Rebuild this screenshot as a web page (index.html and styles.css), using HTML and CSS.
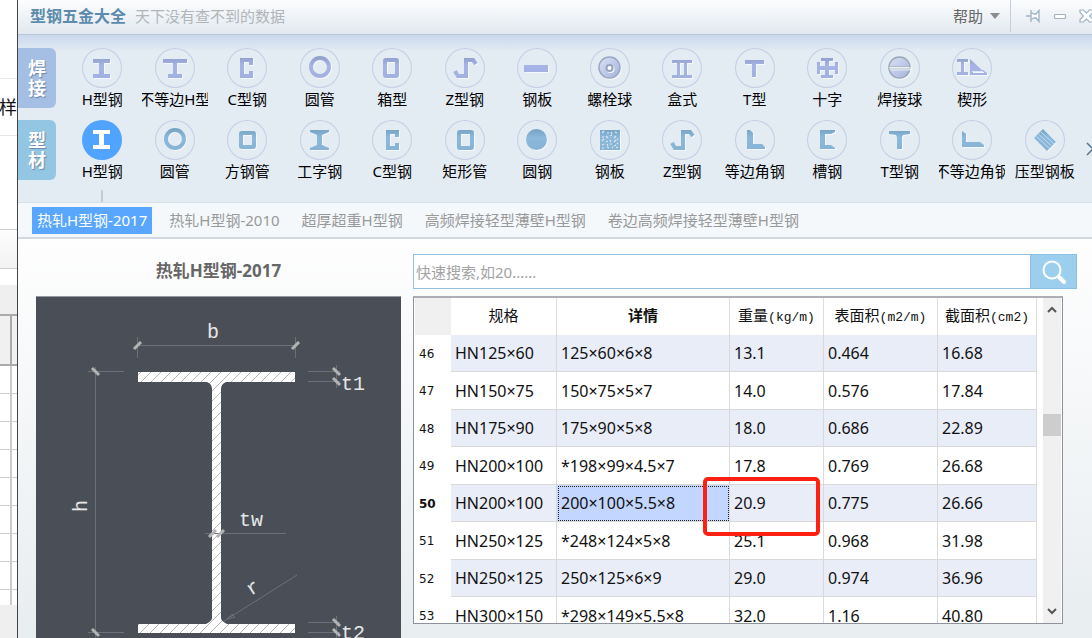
FILE: index.html
```html
<!DOCTYPE html>
<html lang="zh-CN">
<head>
<meta charset="utf-8">
<title>型钢五金大全</title>
<link rel="stylesheet" href="styles.css">
</head>
<body>
<svg class="defs" width="0" height="0" aria-hidden="true">
  <defs>
    <linearGradient id="violet" gradientUnits="userSpaceOnUse" x1="0" y1="9" x2="0" y2="31"><stop offset="0" stop-color="#919fcb"/><stop offset=".4" stop-color="#a6b4e6"/><stop offset="1" stop-color="#a2b0de"/></linearGradient>
    <linearGradient id="blue" gradientUnits="userSpaceOnUse" x1="0" y1="9" x2="0" y2="31"><stop offset="0" stop-color="#76a3c2"/><stop offset=".4" stop-color="#8cb9dc"/><stop offset="1" stop-color="#86b2d2"/></linearGradient>
    <linearGradient id="ball" x1="0" y1="0" x2="1" y2="1"><stop offset="0" stop-color="#dbe2f3"/><stop offset="1" stop-color="#a5b2df"/></linearGradient>
    <pattern id="hatch" width="10" height="10" patternUnits="userSpaceOnUse"><rect width="10" height="10" fill="#fff"/><path d="M-1 11L11 -1" stroke="#b4b4b4" stroke-width="1"/></pattern>
  </defs>
</svg>
<div class="desktop">
  <aside class="backdrop">
    <div class="bd-a"></div><div class="bd-b"><span>样</span></div><div class="bd-c"></div><div class="bd-d"></div><div class="bd-e"></div><div class="bd-f"></div>
    <div class="bd-head"></div>
    <div class="bd-grid"></div>
  </aside>
  <main class="window">
    <header class="titlebar">
      <h1>型钢五金大全</h1>
      <span class="slogan">天下没有查不到的数据</span>
      <button class="help">帮助 <svg width="10" height="6" viewBox="0 0 10 6"><path d="M0 0h10L5 6z" fill="#8c8c8c"/></svg></button>
      <div class="winbtns">
        <button aria-label="固定"><svg width="16" height="14" viewBox="0 0 16 14"><path d="M1 7h5M6 1v12M6 3.500l3 1.500h2l3-3.500v11L11 9H9l-3 1.500" fill="#fff" stroke="#9db3c3" stroke-width="1.300"/></svg></button>
        <button aria-label="最小化"><svg width="14" height="14" viewBox="0 0 14 14"><rect x="1.500" y="5.500" width="11" height="4" rx="1" fill="#fff" stroke="#9db3c3" stroke-width="1.200"/></svg></button>
        <button aria-label="关闭"><svg width="15" height="14" viewBox="0 0 15 14"><path d="M1 1h3.500L7.500 4l3-3H14v2.500L10.500 7l3.500 3.500V13h-3.500l-3-3-3 3H1v-2.500L4.500 7 1 3.500z" fill="#fff" stroke="#9db3c3" stroke-width="1.200"/></svg></button>
      </div>
    </header>

    <section class="ribbon">
      <div class="row violet">
        <button class="side">焊<br>接</button>
        <div class="items">
          <button class="item"><svg viewBox="0 0 40 40"><path d="M11 11h17v4h-6v11h6v4H11v-4h6V15h-6z"/></svg><span>H型钢</span></button>
          <button class="item"><svg viewBox="0 0 40 40"><path d="M8 11h24v4H22v11h5v4H13v-4h5V15H8z"/></svg><span>不等边H型</span></button>
          <button class="item"><svg viewBox="0 0 40 40"><path d="M13 10h13v7h-4v-3h-5v12h5v-3h4v7H13z"/></svg><span>C型钢</span></button>
          <button class="item"><svg viewBox="0 0 40 40"><circle class="ln" cx="20" cy="19" r="9"/></svg><span>圆管</span></button>
          <button class="item"><svg viewBox="0 0 40 40"><rect class="ln" x="13" y="12" width="12" height="16" rx="1"/></svg><span>箱型</span></button>
          <button class="item"><svg viewBox="0 0 40 40"><path class="ln" d="M10 23l3 5h8V12h7l3 4"/></svg><span>Z型钢</span></button>
          <button class="item"><svg viewBox="0 0 40 40"><path d="M7 17h24v7H7z"/></svg><span>钢板</span></button>
          <button class="item"><svg viewBox="0 0 40 40"><circle cx="19.500" cy="19.500" r="10.500" style="fill:url(#ball);stroke:#9aa9c0;stroke-width:1.500"/><circle cx="19.500" cy="20" r="3" style="fill:#fff;stroke:#96a4bf;stroke-width:2"/></svg><span>螺栓球</span></button>
          <button class="item"><svg viewBox="0 0 40 40"><path d="M10 12h20v3h-5v12h5v3H10v-3h5V15h-5zM18 15v12h4V15z" fill-rule="evenodd"/></svg><span>盒式</span></button>
          <button class="item"><svg viewBox="0 0 40 40"><path d="M10 12h19v4h-8v13h-4V16h-7z"/></svg><span>T型</span></button>
          <button class="item"><svg viewBox="0 0 40 40"><path d="M14 10h12v3h-4v5h6v-4h3v12h-3v-4h-6v5h4v3H14v-3h4v-5h-5v4h-3V14h3v4h5v-5h-4z"/></svg><span>十字</span></button>
          <button class="item"><svg viewBox="0 0 40 40"><circle cx="19.500" cy="19.500" r="10.500" style="fill:url(#ball);stroke:#9aa9b8;stroke-width:1.500"/><path d="M9 18.500h21v2.500H9z" style="fill:#edf1f4;stroke:#9aa9b8;stroke-width:.7"/></svg><span>焊接球</span></button>
          <button class="item"><svg viewBox="0 0 40 40"><path d="M5 11h11v3h-4v10h4v3H5v-3h4V14H5zM18 11l12 11H18zM18 22l13 0 4 3v2H18z"/><path d="M20 23.500h11" style="fill:none;stroke:#dfe6f8;stroke-width:1"/></svg><span>楔形</span></button>
        </div>
      </div>
      <div class="row blue">
        <button class="side">型<br>材</button>
        <div class="items">
          <button class="item active"><svg viewBox="0 0 40 40"><path d="M11 10h17v4h-6v11h6v4H11v-4h6V14h-6z"/></svg><span>H型钢</span></button>
          <button class="item"><svg viewBox="0 0 40 40"><circle class="ln" cx="20" cy="19" r="9"/></svg><span>圆管</span></button>
          <button class="item"><svg viewBox="0 0 40 40"><rect class="ln" x="14" y="13" width="13" height="14" rx="1"/></svg><span>方钢管</span></button>
          <button class="item"><svg viewBox="0 0 40 40"><path d="M10 10h19v2l-7 3v10l7 3v2H10v-2l7-3V15l-7-3z"/></svg><span>工字钢</span></button>
          <button class="item"><svg viewBox="0 0 40 40"><path d="M14 10h13v7h-4v-3h-5v12h5v-3h4v7H14z"/></svg><span>C型钢</span></button>
          <button class="item"><svg viewBox="0 0 40 40"><rect class="ln" x="14" y="12" width="13" height="16" rx="1"/></svg><span>矩形管</span></button>
          <button class="item"><svg viewBox="0 0 40 40"><circle cx="19.500" cy="19.500" r="10.500"/></svg><span>圆钢</span></button>
          <button class="item"><svg viewBox="0 0 40 40"><path d="M10 10h20v20H10z"/><path d="M12 13l2-2m3 2h2m2-1l1 2m3-2l2 1M12 17h2m2-1l2 2m2-2l2-1m2 3l2-2m1 3l1 1M12 21l2-2m2 3l2-1m2-1l1 2m3 0l2-2M12 25l2-1m3 0l1 2m2-2h2m2 2l2-1m1-2l1 1M12 28h2m3-1l2 1m3-1l1 1m3-1l2 1" style="fill:none;stroke:#dceaf5;stroke-width:1.200;filter:none"/></svg><span>钢板</span></button>
          <button class="item"><svg viewBox="0 0 40 40"><path class="ln" d="M10 23l3 5h8V12h7l3 4"/></svg><span>Z型钢</span></button>
          <button class="item"><svg viewBox="0 0 40 40"><path d="M12 10h3l3 3v11h9l3 3v2H12z"/></svg><span>等边角钢</span></button>
          <button class="item"><svg viewBox="0 0 40 40"><path d="M13 10h15v2l-4 2h-6v11h6l4 3v1H13z"/></svg><span>槽钢</span></button>
          <button class="item"><svg viewBox="0 0 40 40"><path d="M9 11h21v3l-7 1-1 2v12h-5V17l-1-2-7-1z"/></svg><span>T型钢</span></button>
          <button class="item"><svg viewBox="0 0 40 40"><path d="M10 11l4 3v8h14l4 3v2H10z"/></svg><span>不等边角钢</span></button>
          <button class="item"><svg viewBox="0 0 40 40"><path d="M18 9l13 13-9 9L9 18z"/><path d="M16 12l13 12M13.500 14l13 12M11.500 16.500l13 12" style="fill:none;stroke:#c4def2;stroke-width:1;filter:none"/></svg><span>压型钢板</span></button>
        </div>
      </div>
      <button class="more" aria-label="更多"><svg width="8" height="14" viewBox="0 0 8 14"><path d="M1 1l6 6-6 6" fill="none" stroke="#55738c" stroke-width="1.500"/></svg></button>
    </section>

    <nav class="tabs">
      <button class="on">热轧H型钢-2017</button><button>热轧H型钢-2010</button><button>超厚超重H型钢</button><button>高频焊接轻型薄壁H型钢</button><button>卷边高频焊接轻型薄壁H型钢</button>
    </nav>

    <div class="content">
      <section class="drawing">
        <h2>热轧H型钢-2017</h2>
        <svg viewBox="0 0 365 360">
          <path d="M102 75h157v10h-69q-5 2-5 7v229q0 3 6 6h68v9H102v-9h68q6-3 6-6V92q0-5-5-7h-69z" fill="url(#hatch)"/>
          <g class="thin"><path d="M101.500 40v21M259.500 40v21M101.500 48.500h158M52 74.500h36M59.500 70v270M52 335.500h36M272 74.500h32M272 84.500h32M300.500 68v23M169 236.500h81M261 278l-73 46M272 325.500h32M272 335.500h32M300.500 319v23M191 322l5-5 3 3z"/></g>
          <g class="tick"><path d="M98 52l7-7M256 52l7-7M56 71l7 7M56 332l7 7M297 71l7 7M297 81l7 7M297 322l7 7M297 332l7 7M173 240l7-7M181 240l7-7"/></g>
          <g class="dim"><text x="171" y="41">b</text><text x="305" y="93">t1</text><text x="203" y="229">tw</text><text x="305" y="342">t2</text><text transform="translate(51 215) rotate(-90)">h</text><text transform="translate(215 299) rotate(-33)">r</text></g>
        </svg>
      </section>
      <section class="data">
        <form class="search">
          <input type="text" placeholder="快速搜索,如20......" aria-label="快速搜索">
          <button type="button" aria-label="搜索"><svg width="24" height="24" viewBox="0 0 24 24"><circle cx="10" cy="10" r="8.500" fill="none" stroke="#fff" stroke-width="2"/><path d="M17 17l5 5" stroke="#fff" stroke-width="4" stroke-linecap="round"/></svg></button>
        </form>
        <div class="grid">
          <div class="rows">
          <table>
            <colgroup><col class="c0"><col class="c1"><col class="c2"><col class="c3"><col class="c4"><col class="c5"></colgroup>
            <thead><tr><td class="corner"></td><th>规格</th><th class="cur">详情</th><th>重量<span>(kg/m)</span></th><th>表面积<span>(m2/m)</span></th><th>截面积<span>(cm2)</span></th></tr></thead>
            <tbody>
              <tr><th>46</th><td>HN125×60</td><td>125×60×6×8</td><td>13.1</td><td>0.464</td><td>16.68</td></tr>
              <tr><th>47</th><td>HN150×75</td><td>150×75×5×7</td><td>14.0</td><td>0.576</td><td>17.84</td></tr>
              <tr><th>48</th><td>HN175×90</td><td>175×90×5×8</td><td>18.0</td><td>0.686</td><td>22.89</td></tr>
              <tr><th>49</th><td>HN200×100</td><td>*198×99×4.5×7</td><td>17.8</td><td>0.769</td><td>26.68</td></tr>
              <tr><th class="cur">50</th><td>HN200×100</td><td class="sel">200×100×5.5×8</td><td class="marked">20.9</td><td>0.775</td><td>26.66</td></tr>
              <tr><th>51</th><td>HN250×125</td><td>*248×124×5×8</td><td>25.1</td><td>0.968</td><td>31.98</td></tr>
              <tr><th>52</th><td>HN250×125</td><td>250×125×6×9</td><td>29.0</td><td>0.974</td><td>36.96</td></tr>
              <tr><th>53</th><td>HN300×150</td><td>*298×149×5.5×8</td><td>32.0</td><td>1.16</td><td>40.80</td></tr>
            </tbody>
          </table>
          </div>
          <div class="scrollbar">
            <button aria-label="向上"><svg width="10" height="8" viewBox="0 0 10 8"><path d="M1 6l4-4 4 4" fill="none" stroke="#555" stroke-width="2"/></svg></button>
            <div class="track"><div class="thumb"></div></div>
            <button aria-label="向下"><svg width="10" height="8" viewBox="0 0 10 8"><path d="M1 2l4 4 4-4" fill="none" stroke="#555" stroke-width="2"/></svg></button>
          </div>
        </div>
      </section>
    </div>
  </main>
</div>
</body>
</html>
```
FILE: styles.css
```css
* { box-sizing: border-box; }
body { margin: 0; font: 15px/20px "Noto Sans", "Noto Sans CJK SC", sans-serif; color: #111; overflow: hidden; }
button { border: 0; padding: 0; background: none; font: inherit; color: inherit; }
h1, h2 { margin: 0; }
.defs { position: absolute; }
.desktop { display: flex; height: 100vh; overflow: hidden; }

/* document visible behind the window */
.backdrop { flex: 0 0 17px; display: flex; flex-direction: column; overflow: hidden; background: #fff; }
.backdrop > div { flex: none; }
.bd-a { height: 79px; border-bottom: 1px solid #e6e6e6; }
.bd-b { height: 57px; border-bottom: 1px solid #e6e6e6; display: flex; justify-content: flex-end; align-items: center; font-size: 18px; }
.bd-c { height: 94px; border-bottom: 1px solid #ccc; }
.bd-d { height: 39px; border-bottom: 1px solid #ccc; background: linear-gradient(#fdfdfd, #f2f2f2); }
.bd-e { height: 16px; }
.bd-f { height: 31px; border-bottom: 2px solid #aaa; background: #efefef; }
.bd-head { height: 50px; border-bottom: 2px solid #aaa; background: linear-gradient(90deg, #f0f0f0 10px, #aaa 10px 12px, #f0f0f0 12px); }
.backdrop > .bd-grid { flex: 0 1 239px; background: linear-gradient(90deg, transparent 10px, #ccc 10px 12px, transparent 12px), repeating-linear-gradient(#fff 0 27px, #ccc 27px 28px); }
.backdrop::after { content: ""; flex: 1; background: #efefef; }

.window { flex: 1; min-width: 0; display: flex; flex-direction: column; border-left: 1px solid #444; background: #fff; }

.titlebar { flex: none; height: 35px; padding: 0 0 2px 12px; display: flex; align-items: center; background: linear-gradient(#fcfdfe, #e1e8ef); border-bottom: 1px solid #b7c5d4; }
.titlebar h1 { font-size: 16px; line-height: 20px; color: #5c8bad; }
.slogan { margin-left: 9px; color: #b0b5ba; }
.help { margin-left: auto; display: flex; align-items: center; gap: 7px; color: #666; }
.winbtns { align-self: stretch; display: flex; align-items: center; gap: 12px; margin: 0 -2px 0 10px; padding-left: 14px; border-left: 1px solid #c3cfda; }
.winbtns svg { display: block; }

.ribbon { position: relative; flex: none; display: flex; flex-direction: column; gap: 11px; padding-top: 13px; background: linear-gradient(#c9d8ec, #e3ebf3 16px); border-bottom: 1px solid #d7dfe7; }
.row { display: flex; align-items: flex-start; }
.side { flex: none; width: 38px; height: 60px; border-radius: 0 6px 6px 0; font-size: 18px; line-height: 20px; font-weight: 700; color: #fff; text-shadow: 1px 1px 1px #6c88aa; }
.violet .side { background: #a5bee4; }
.blue .side { background: #93c6e2; }
.items { flex: 1; display: grid; grid-template-columns: repeat(14, 1fr); padding: 0 11px 0 10px; min-width: 0; }
.item { display: flex; flex-direction: column; align-items: center; min-width: 0; }
.item svg { width: 40px; height: 40px; box-shadow: inset 0 0 0 1px #c3cfe5; border-radius: 50%; flex: none; }
.item svg * { filter: drop-shadow(1px 1px 0 #f4f8fc); }
.violet .item svg > * { fill: url(#violet); }
.blue .item svg > * { fill: url(#blue); }
.item svg > .ln { stroke-width: 4; }
.violet .item svg > .ln { fill: none; stroke: url(#violet); }
.blue .item svg > .ln { fill: none; stroke: url(#blue); }
.blue .active svg { background: #50a3ff; box-shadow: none; }
.blue .active svg > * { fill: #fff; filter: none; }
.item span { width: 66px; margin-top: 1px; display: flex; justify-content: center; overflow: hidden; white-space: nowrap; color: #000; }
.active::after { content: ""; width: 2px; height: 12px; margin-top: 9px; background: #c3ccd6; }
.more { position: absolute; right: -2px; top: 107px; }
.more svg { display: block; }

.tabs { flex: none; display: flex; gap: 12px; padding: 4px 14px 3px; background: #f4f8fb; border-bottom: 2px solid #d3d9e0; color: #999; }
.tabs button { height: 27px; padding: 0 5px 1px; white-space: nowrap; }
.tabs .on { background: #58a6fe; color: #fff; }

.content { flex: 1; min-height: 0; display: grid; grid-template-columns: minmax(0, 365fr) minmax(0, 664fr); grid-template-rows: minmax(0, 1fr); gap: 12px; padding: 15px 15px 0 18px; background: linear-gradient(#fefefe, #e8edf0); }
.drawing h2 { height: 42px; font-size: 17px; line-height: 34px; text-align: center; color: #666; }
.drawing svg { display: block; width: 100%; background: #4a4e57; border-top: 1px solid #949a9f; }
.thin { fill: none; stroke: #6c7077; stroke-width: 1; }
.tick { fill: none; stroke: #b3b3b3; stroke-width: 3; }
.dim { fill: #e6e6e6; font-family: "Liberation Mono", monospace; font-size: 20px; }

.data { display: flex; flex-direction: column; padding-bottom: 14px; min-height: 0; }
.search { flex: none; display: flex; height: 35px; margin-bottom: 7px; }
.search input { flex: 1; min-width: 0; border: 1px solid #93c1e0; border-right: 0; padding: 0 2px; font: inherit; background: #fff; }
.search input::placeholder { color: #a2a2a2; opacity: 1; }
.search button { width: 47px; background: #9ccfee; border: 1px solid #8cc0e4; display: flex; align-items: center; justify-content: center; }
.grid { flex: 1; min-height: 0; margin-right: 14px; display: flex; gap: 6px; background: #fff; border: 1px solid #8e929c; border-top: 2px solid #adaeb6; padding: 0 1px; overflow: hidden; }
.rows { flex: 1; min-width: 0; overflow: hidden; }
table { width: 100%; table-layout: fixed; border-collapse: separate; border-spacing: 0; }
.c0 { width: 36px; } .c1 { width: 106px; } .c2 { width: 173px; } .c3 { width: 94px; } .c4 { width: 114px; } .c5 { width: 99px; }
td, th { padding: 0 4px; white-space: nowrap; text-align: left; font-weight: 400; }
thead tr { height: 37px; }
thead th { padding: 0 0 3px; text-align: center; border-right: 1px solid #dedede; }
thead span { font: 13px "Liberation Mono", monospace; }
thead .cur { font-weight: 700; }
.corner { background: #f0f0f0; }
tbody tr { height: 37px; }
tbody tr:nth-child(even) { height: 38px; }
tbody td { font-size: 16px; border-right: 1px solid #d9d9d9; border-bottom: 1px solid #d9d9d9; }
tbody tr:nth-child(odd) td { background: #e9edf8; }
tbody tr:nth-child(even) td { background: #fff; }
tbody th { font: 12px/16px "DejaVu Sans", sans-serif; }
tbody th.cur { font-weight: 700; }
tbody tr:nth-child(odd) td.sel { background: #c3d6ff; outline: 1px dotted #222; outline-offset: -2px; }
.marked { position: relative; }
.marked::after { content: ""; position: absolute; left: -27px; right: 3px; top: -8px; bottom: -15px; border: 4px solid #fd2113; border-radius: 5px; }
.scrollbar { flex: none; width: 18px; display: flex; flex-direction: column; background: #f0f0f0; }
.scrollbar button { height: 24px; display: flex; align-items: center; justify-content: center; }
.track { flex: 1; padding-top: 92px; }
.thumb { height: 22px; background: #cdcdcd; }
```
